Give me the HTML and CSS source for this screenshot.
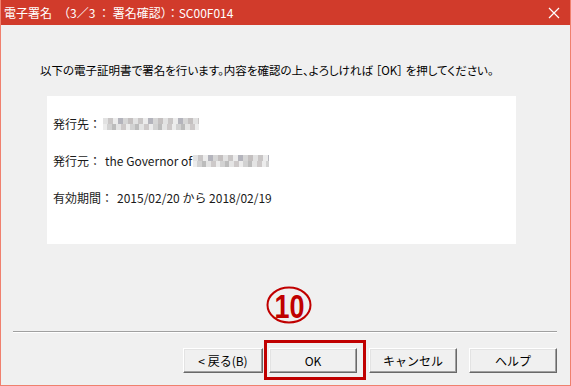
FILE: index.html
```html
<!DOCTYPE html>
<html lang="ja">
<head>
<meta charset="utf-8">
<link rel="stylesheet" href="styles.css">
</head>
<body>
<div class="window">
  <div class="titlebar">
    <span class="title">電子署名　（3／3 ： 署名確認）：SC00F014</span>
    <svg class="close" width="12" height="12" viewBox="0 0 12 12"><path d="M1 1L11 11M11 1L1 11" stroke="#fff" stroke-width="1.2" fill="none"/></svg>
  </div>
  <div class="content">
    <p class="message">以下の電子証明書で署名を行います。内容を確認の上、よろしければ ［OK］ を押してください。</p>
    <div class="certbox">
      <div class="row"><span class="label">発行先：</span><span class="mosaic m1"></span></div>
      <div class="row"><span class="label">発行元：</span><span class="val">the Governor of</span><span class="mosaic m2"></span></div>
      <div class="row"><span class="label">有効期間：</span><span class="val">2015/02/20 から 2018/02/19</span></div>
    </div>
  </div>
  <div class="footer">
    <div class="separator"></div>
    <div class="buttons">
      <button class="btn back">&lt; 戻る(B)</button>
      <button class="btn">OK</button>
      <button class="btn">キャンセル</button>
      <button class="btn">ヘルプ</button>
    </div>
  </div>
  <svg class="annot-num" width="48" height="40" viewBox="0 0 48 40">
    <ellipse cx="23" cy="19" rx="21.5" ry="17.5" fill="none" stroke="#c00000" stroke-width="2"/>
    <text x="23.5" y="32" text-anchor="middle" font-family="Liberation Sans, sans-serif" font-weight="bold" font-size="34" fill="#c00000" textLength="30" lengthAdjust="spacingAndGlyphs">10</text>
  </svg>
  <div class="annot-box"></div>
</div>
</body>
</html>
```

FILE: styles.css
```css
html, body {
  margin: 0;
  padding: 0;
  background: #f0f0f0;
}
.window {
  position: relative;
  width: 571px;
  height: 386px;
  box-sizing: border-box;
  border: 1px solid #f0806e;
  border-top: none;
  background: #f0f0f0;
  font-family: "Noto Sans CJK JP", "Noto Sans", sans-serif;
  font-size: 12px;
  color: #000;
  display: flex;
  flex-direction: column;
}
.titlebar {
  height: 25px;
  background: #d13b2b;
  display: flex;
  align-items: center;
  justify-content: space-between;
  padding: 0 10px 0 3px;
  flex-shrink: 0;
}
.title {
  color: #fff;
  font-size: 12px;
  line-height: 16px;
}
.close {
  display: block;
}
.content {
  padding: 0 0 0 39px;
}
.message {
  margin: 36px 0 0 0;
  line-height: 18px;
  font-size: 11.5px;
  font-feature-settings: "palt";
}
.certbox {
  margin: 17px 0 0 7px;
  width: 469px;
  height: 148px;
  box-sizing: border-box;
  background: #fff;
  padding: 20px 0 0 6px;
  display: flex;
  flex-direction: column;
  gap: 21px;
}
.row {
  display: flex;
  align-items: center;
  height: 16px;
  line-height: 16px;
  color: #1a1a1a;
}
.val {
  margin-left: 4px;
}
.mosaic {
  display: inline-block;
  height: 12px;
  margin-left: 2px;
  background:
    repeating-linear-gradient(90deg, #e2e2e2 0 5px, #c9c6c6 5px 10px, #ececec 10px 15px, #b4b4bc 15px 20px, #d6d6d6 20px 25px, #c4c0c0 25px 30px) top / 100% 6px no-repeat,
    repeating-linear-gradient(90deg, #ececec 0 4px, #d2d2d2 4px 9px, #bcbcbc 9px 13px, #e4e4e4 13px 18px, #cdc9c9 18px 23px) bottom / 100% 6px no-repeat;
}
.m1 { width: 96px; }
.m2 { width: 76px; margin-left: 1px; }
.footer {
  margin-top: auto;
  padding: 0 13px 12px 12px;
}
.separator {
  height: 1px;
  background: #a0a0a0;
  border-bottom: 1px solid #fff;
  margin-bottom: 15px;
}
.buttons {
  display: flex;
  justify-content: flex-end;
  gap: 12px;
}
.btn {
  width: 88px;
  height: 25px;
  box-sizing: border-box;
  background: #f0f0f0;
  border: 1px solid;
  border-color: #fff #696969 #696969 #fff;
  box-shadow: inset -1px -1px 0 #a0a0a0, inset 1px 1px 0 #e3e3e3;
  font-family: "Noto Sans CJK JP", "Noto Sans", sans-serif;
  font-size: 12px;
  color: #000;
  padding: 0;
  line-height: 16px;
}
.btn.back {
  width: 80px;
  margin-right: -6px;
}
.annot-num {
  position: absolute;
  left: 265px;
  top: 286px;
}
.annot-box {
  position: absolute;
  left: 263px;
  top: 340px;
  width: 102px;
  height: 40px;
  box-sizing: border-box;
  border: 3px solid #c00000;
}
```
